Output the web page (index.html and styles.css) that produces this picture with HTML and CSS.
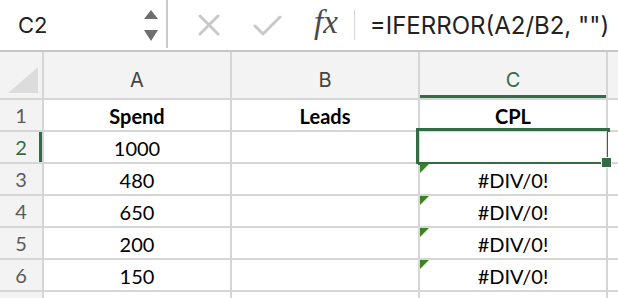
FILE: index.html
```html
<!DOCTYPE html>
<html lang="en">
  <head>
    <meta charset="UTF-8" />
    <meta name="viewport" content="width=device-width, initial-scale=1.0" />
    <title>CPL sheet</title>
    <link rel="stylesheet" href="styles.css">
  </head>
  <body>
    <div class="formula-bar">
      <div class="name-box">
        <span class="cell-ref">C2</span>
        <svg class="spinner" width="14" height="32" viewBox="0 0 14 32">
          <polygon points="7,0 14,9 0,9" fill="#6e6e6e" />
          <polygon points="0,20 14,20 7,31" fill="#6e6e6e" />
        </svg>
      </div>
      <div class="divider"></div>
      <svg class="btn-cancel" width="22" height="22" viewBox="0 0 22 22">
        <path d="M2 2 L20 20 M20 2 L2 20" stroke="#c9c9c9" stroke-width="3" stroke-linecap="round" />
      </svg>
      <svg class="btn-enter" width="29" height="21" viewBox="0 0 29 21">
        <path d="M2 11 L10 19 L27 2" stroke="#c9c9c9" stroke-width="3" fill="none" stroke-linecap="round" stroke-linejoin="round" />
      </svg>
      <span class="fx">fx</span>
      <div class="divider thin"></div>
      <span class="formula">=IFERROR(A2/B2, "")</span>
    </div>

    <div class="sheet">
      <div class="corner">
        <svg width="30" height="26" viewBox="0 0 30 26"><polygon points="30,0 30,26 0,26" fill="#dcdcdc" /></svg>
      </div>
      <div class="col-head">A</div>
      <div class="col-head">B</div>
      <div class="col-head active">C</div>
      <div class="col-head"></div>

      <div class="row-head">1</div>
      <div class="cell bold">Spend</div>
      <div class="cell bold">Leads</div>
      <div class="cell bold">CPL</div>
      <div class="cell"></div>

      <div class="row-head active">2</div>
      <div class="cell">1000</div>
      <div class="cell"></div>
      <div class="cell selected"><span class="handle"></span></div>
      <div class="cell"></div>

      <div class="row-head">3</div>
      <div class="cell">480</div>
      <div class="cell"></div>
      <div class="cell error">#DIV/0!</div>
      <div class="cell"></div>

      <div class="row-head">4</div>
      <div class="cell">650</div>
      <div class="cell"></div>
      <div class="cell error">#DIV/0!</div>
      <div class="cell"></div>

      <div class="row-head">5</div>
      <div class="cell">200</div>
      <div class="cell"></div>
      <div class="cell error">#DIV/0!</div>
      <div class="cell"></div>

      <div class="row-head">6</div>
      <div class="cell">150</div>
      <div class="cell"></div>
      <div class="cell error">#DIV/0!</div>
      <div class="cell"></div>

      <!-- row 7 is only a sliver at the bottom edge -->
      <div class="row-head"></div>
      <div class="cell"></div>
      <div class="cell"></div>
      <div class="cell"></div>
      <div class="cell"></div>
    </div>
  </body>
</html>
```

FILE: styles.css
```css
:root {
  --grid-line: #d6d6d6;
  --head-bg: #f3f3f3;
  --excel-green: #336b45;
  --error-green: #3b8226;
}

body {
  margin: 0;
  width: 618px;
  height: 298px;
  overflow: hidden;
  background: #fff;
  font-family: Inter, "Noto Sans", sans-serif;
}

/* top formula bar */
.formula-bar {
  display: flex;
  align-items: center;
  height: 50px;
  border-bottom: 2px solid #c6c6c6;
  color: #222;
}

.name-box {
  box-sizing: border-box;
  width: 166px;
  height: 100%;
  display: flex;
  align-items: center;
  justify-content: space-between;
  padding: 0 8px 0 18px;
}

.cell-ref {
  font-size: 22px;
}

.spinner {
  margin-top: 2px;
}

.divider {
  width: 2px;
  height: 48px;
  align-self: flex-start;
  background: #c9c9c9;
}

.divider.thin {
  width: 1px;
  height: 30px;
  align-self: center;
  background: #d6d6d6;
  margin-left: 16px;
}

.btn-cancel {
  margin-left: 30px;
}

.btn-enter {
  margin-left: 33px;
}

.fx {
  margin-left: 32px;
  font-family: "Liberation Serif", serif;
  font-style: italic;
  font-size: 33px;
  color: #4a4a4a;
  margin-top: -6px;
}

.formula {
  margin-left: 15px;
  font-size: 24px;
  white-space: nowrap;
}

/* grid */
.sheet {
  display: grid;
  grid-template-columns: 42px 186px 186px 186px 1fr;
  grid-template-rows: 46px repeat(6, 30px) 6px;
  gap: 2px;
  background: var(--grid-line);
}

.corner,
.col-head,
.row-head {
  background: var(--head-bg);
  display: flex;
  align-items: center;
  justify-content: center;
  font-size: 20px;
  color: #444;
}

.corner {
  align-items: flex-end;
  justify-content: flex-end;
  padding: 0 4px 5px 0;
}

.col-head {
  padding-top: 9px;
}

.col-head.active {
  color: var(--excel-green);
  border-bottom: 3px solid var(--excel-green);
  padding-top: 12px;
}

.row-head {
  font-family: Lato, sans-serif;
  font-size: 20px;
  color: #5b5b5b;
}

.row-head.active {
  color: var(--excel-green);
  box-shadow: inset -3px 0 0 var(--excel-green);
}

.cell {
  position: relative;
  background: #fff;
  display: flex;
  align-items: center;
  justify-content: center;
  padding-top: 2px;
  font-family: Lato, sans-serif;
  font-size: 20px;
  color: #000;
}

.cell.bold {
  font-weight: 700;
}

.cell.selected::after {
  content: "";
  position: absolute;
  top: -4px;
  left: -4px;
  right: -4px;
  bottom: -3px;
  border: 3px solid var(--excel-green);
}

.handle {
  position: absolute;
  right: -6px;
  bottom: -6px;
  width: 9px;
  height: 9px;
  background: var(--excel-green);
  border: 1px solid #fff;
  z-index: 1;
}

.cell.error::before {
  content: "";
  position: absolute;
  top: 0;
  left: 0;
  border-top: 9px solid var(--error-green);
  border-right: 9px solid transparent;
}
```
